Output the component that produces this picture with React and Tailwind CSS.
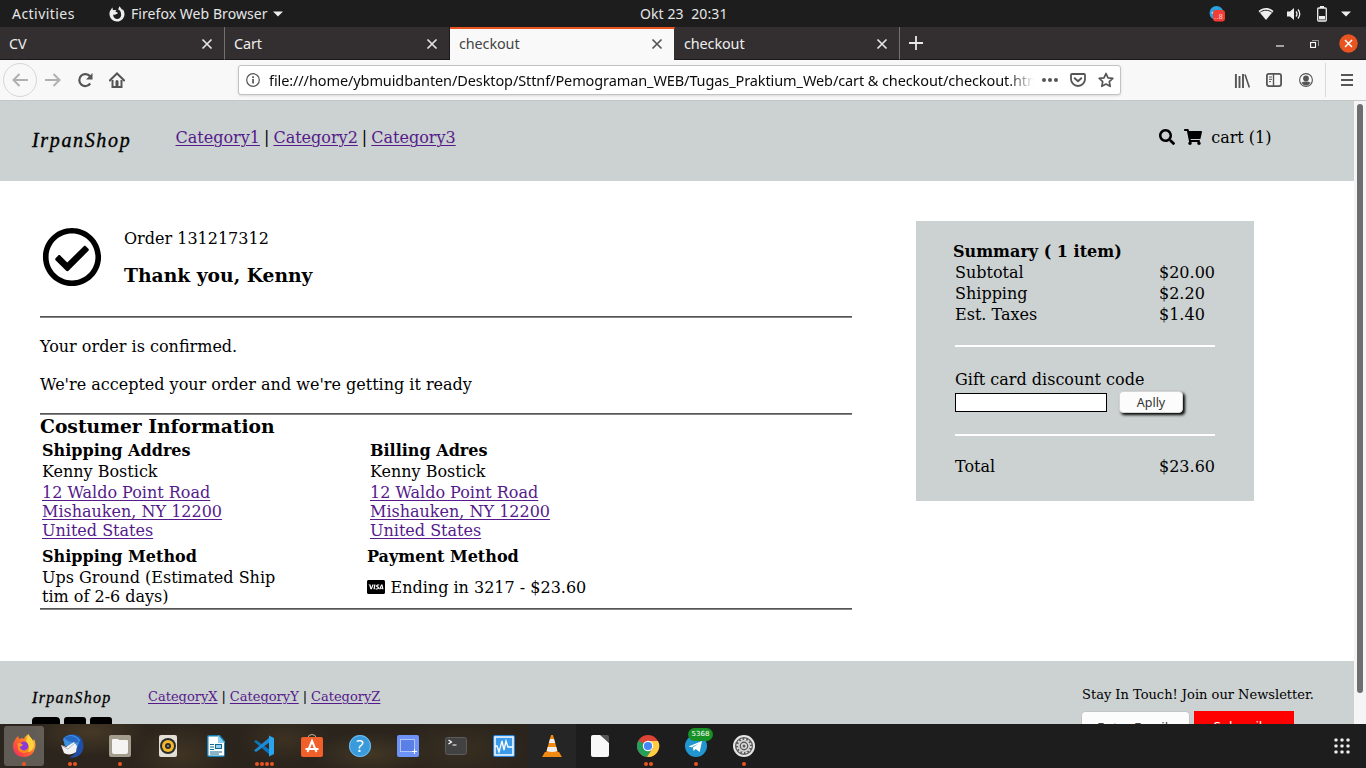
import React from "react";
import { FaSearch, FaShoppingCart, FaCcVisa, FaRegCheckCircle } from "react-icons/fa";

const ui = "font-['Noto_Sans',sans-serif]";

function Close({ className }) {
  return (
    <svg width="12" height="12" viewBox="0 0 12 12" className={className}>
      <path d="M1.5 1.5l9 9M10.5 1.5l-9 9" stroke="currentColor" strokeWidth="1.7" fill="none" />
    </svg>
  );
}

function TopBar() {
  return (
    <div className={`flex h-[27px] items-center bg-[#1d1d1d] text-[14px] text-[#e6e6e6] ${ui}`}>
      <div className="flex w-[640px] items-center">
        <span className="ml-3 w-[97px] whitespace-nowrap tracking-[0.45px]">Activities</span>
        <svg width="16" height="16" viewBox="0 0 16 16">
          <path d="M2.2 3.2C.8 4.700.3 6.400.5 8.500c.4 4 3.500 7 7.500 7s7.500-3.200 7.500-7.300c0-2.200-.8-4-1.900-5.200l-.4 1.400C12.500 2.600 11.400 1.300 10 .3c.2 1.200-.2 2.200-1 3 1.800.8 3 2.500 3 4.500a4 4 0 1 1-7.800.7c.8.5 1.900.4 2.600-.2l1.700-.6c.4-.9-.2-1.600-1-1.700L6.200 5.900l1.200-1.400C6.200 3.900 5 4 4.300 4.300 3.500 3.400 3.500 2.500 3.700 1.500 3 2 2.500 2.500 2.200 3.200z" fill="#eee" />
        </svg>
        <span className="ml-[6px] whitespace-nowrap tracking-[0.06px]">Firefox Web Browser</span>
        <svg className="ml-[5px]" width="10" height="6" viewBox="0 0 10 6"><path d="M0 .5h10L5 5.500z" fill="#eee" /></svg>
      </div>
      <span className="whitespace-pre tracking-[0.1px]">Okt 23  20:31</span>
      <div className="ml-auto flex items-center pr-[15px]">
        <svg className="mr-[33px]" width="16" height="16" viewBox="0 0 16 16">
          <circle cx="7.500" cy="7" r="7" fill="#2aa1dc" />
          <path d="M2 7l4-2v3z" fill="#fff" />
          <rect x="4" y="4" width="12" height="11.500" rx="3" fill="#f23c34" />
          <text x="5" y="13" fontSize="7" fill="#ffd5cf" fontFamily="DejaVu Sans">..8</text>
        </svg>
        <svg className="mr-[13px]" width="16" height="14" viewBox="0 0 16 14">
          <path d="M.5 4C5 0 11 0 15.500 4L8 13z" fill="#eee" />
          <path d="M2.200 5.200c3.500-2.600 8-2.600 11.600 0" stroke="#1d1d1d" strokeWidth="1" fill="none" />
        </svg>
        <svg className="mr-[15px]" width="15" height="14" viewBox="0 0 15 14">
          <path d="M0 4.500h3L7 1v12L3 9.500H0z" fill="#eee" />
          <path d="M9 4.500q2 2.500 0 5M11 2.500q3.500 4.500 0 9" stroke="#eee" strokeWidth="1.300" fill="none" />
        </svg>
        <svg className="mr-[14px]" width="10" height="16" viewBox="0 0 10 16">
          <path d="M3 0h4v2H3z" fill="#eee" />
          <rect x=".7" y="2" width="8.600" height="13" rx="1" stroke="#eee" strokeWidth="1.300" fill="none" />
          <path d="M2 10h6v3.500H2z" fill="#eee" />
        </svg>
        <svg width="10" height="6" viewBox="0 0 10 6"><path d="M0 .5h10L5 5.500z" fill="#eee" /></svg>
      </div>
    </div>
  );
}

function Tab({ title, active, line }) {
  return (
    <div
      className={`flex h-[33px] w-[225px] items-center justify-between border-r pl-[9px] pr-[11px] text-[14.400px] ${
        active
          ? "border-r-[#332f31] border-t-2 border-t-[#e95420] bg-[#f9f9f9] pb-px text-[#444]"
          : line
            ? "border-b border-r-[#727072] border-b-[#1a1a1a] pt-px text-[#eee]"
            : "border-b border-r-[#1d1b1c] border-b-[#1a1a1a] pt-px text-[#eee]"
      }`}
    >
      <span className="tracking-[-0.1px]">{title}</span>
      <Close className={active ? "text-[#555]" : "text-[#e4e4e4]"} />
    </div>
  );
}

function TabBar() {
  return (
    <div className={`flex h-[33px] bg-[#332f31] ${ui}`}>
      <Tab title="CV" line />
      <Tab title="Cart" />
      <Tab title="checkout" active />
      <Tab title="checkout" line />
      <div className="flex flex-1 items-center border-b border-[#1a1a1a] pl-[9px] pr-[9px]">
        <svg width="14" height="14" viewBox="0 0 14 14"><path d="M7 0v14M0 7h14" stroke="#e8e8e8" strokeWidth="1.800" /></svg>
        <div className="-mr-px ml-auto flex items-center pt-px">
          <svg className="mr-[26px] mt-1" width="8" height="2"><path d="M0 1h8" stroke="#eee" strokeWidth="1.200" /></svg>
          <svg className="mr-[20px]" width="9" height="8" viewBox="0 0 9 8">
            <path d="M2 .5h6.500V6" stroke="#999" fill="none" />
            <rect x=".6" y="2.500" width="4.900" height="4.900" stroke="#fff" strokeWidth="1.100" fill="none" />
          </svg>
          <svg width="19" height="19" viewBox="0 0 19 19">
            <circle cx="9.500" cy="9.500" r="9.200" fill="#e95420" />
            <path d="M6 6l7 7M13 6l-7 7" stroke="#fff" strokeWidth="1.500" />
          </svg>
        </div>
      </div>
    </div>
  );
}

function Toolbar() {
  return (
    <div className={`flex h-[41px] items-center border-b border-[#c6c6c6] bg-[#f8f8f8] text-[#555] ${ui}`}>
      <div className="flex w-[238px] items-center pl-[3px]">
        <div className="flex size-[34px] items-center justify-center rounded-full border border-[#d6d6d6] text-[#b0b0b0]">
          <svg width="16" height="14" viewBox="0 0 16 14"><path d="M7.500 1l-6 6 6 6M1.500 7H16" fill="none" stroke="currentColor" strokeWidth="2" /></svg>
        </div>
        <svg className="ml-2 text-[#b0b0b0]" width="16" height="14" viewBox="0 0 16 14"><path d="M8.500 1l6 6-6 6M14.500 7H0" fill="none" stroke="currentColor" strokeWidth="2" /></svg>
        <svg className="ml-4" width="16" height="16" viewBox="0 0 16 16">
          <path d="M13 4.300A6 6 0 1 0 13.200 11.500" fill="none" stroke="currentColor" strokeWidth="2.200" />
          <path d="M15.500 1v6.500H9z" fill="currentColor" />
        </svg>
        <svg className="ml-4" width="16" height="16" viewBox="0 0 16 16">
          <path d="M.8 8.500L8 1.500l7.200 7" fill="none" stroke="currentColor" strokeWidth="2" strokeLinecap="round" />
          <path d="M3.500 8v7h9V8" fill="none" stroke="currentColor" strokeWidth="2" />
          <path d="M6.500 9.500a1.500 1.500 0 0 1 3 0V15h-3z" fill="currentColor" />
        </svg>
      </div>
      <div className="flex h-[30px] w-[883px] items-center rounded-[3px] border border-[#c2c2c2] bg-white pl-[7px] pr-[6px] shadow-sm">
        <svg width="14" height="14" viewBox="0 0 14 14">
          <circle cx="7" cy="7" r="6.300" fill="none" stroke="currentColor" strokeWidth="1.200" />
          <path d="M6.200 6h1.700v4.500H6.200zM6.200 3.300h1.700v1.600H6.200z" fill="currentColor" />
        </svg>
        <span className="ml-[9px] w-[765px] overflow-hidden whitespace-nowrap text-[14.500px] leading-[22px] tracking-[-0.1px] text-[#0c0c0d] [mask-image:linear-gradient(to_right,black_96.500%,transparent)]">
          file:///home/ybmuidbanten/Desktop/Sttnf/Pemograman_WEB/Tugas_Praktium_Web/cart &amp; checkout/checkout.html
        </span>
        <svg className="ml-[8px]" width="16" height="4" viewBox="0 0 16 4"><circle cx="2" cy="2" r="2" fill="currentColor" /><circle cx="8" cy="2" r="2" fill="currentColor" /><circle cx="14" cy="2" r="2" fill="currentColor" /></svg>
        <svg className="ml-3" width="16" height="14" viewBox="0 0 16 14">
          <path d="M2 1h12q1 0 1 1v4a7 7 0 0 1-14 0V2q0-1 1-1z" fill="none" stroke="currentColor" strokeWidth="1.800" />
          <path d="M4.700 5.200L8 8.300l3.300-3.100" fill="none" stroke="currentColor" strokeWidth="1.900" strokeLinecap="round" />
        </svg>
        <svg className="ml-3" width="16" height="16" viewBox="0 0 16 16">
          <path d="M8 1.500l2 4.300 4.800.6-3.500 3.200.9 4.700L8 12l-4.200 2.300.9-4.700L1.200 6.400 6 5.800z" fill="none" stroke="currentColor" strokeWidth="1.700" strokeLinejoin="round" />
        </svg>
      </div>
      <div className="ml-auto flex h-full items-center pr-[13px]">
        <svg width="16" height="15" viewBox="0 0 16 15"><path d="M1.900 1v14M5.500 3v12M9 1v14" stroke="currentColor" strokeWidth="1.900" /><path d="M11 1.500l4.400 13" stroke="currentColor" strokeWidth="1.600" /></svg>
        <svg className="ml-4" width="16" height="14" viewBox="0 0 16 14">
          <rect x=".9" y=".9" width="14.200" height="12.200" rx="2" fill="none" stroke="currentColor" strokeWidth="1.800" />
          <path d="M7.500 1v12" stroke="currentColor" strokeWidth="1.400" /><path d="M3 4h3M3 6.300h3M3 8.600h2" stroke="currentColor" />
        </svg>
        <svg className="ml-[17px]" width="14" height="14" viewBox="0 0 14 14">
          <circle cx="7" cy="7" r="6.400" fill="none" stroke="currentColor" strokeWidth="1.100" />
          <circle cx="7" cy="5.500" r="2.900" fill="currentColor" />
          <path d="M2.500 9.500Q7 7.500 11.500 9.500 10 12.500 7 12.500T2.500 9.500z" fill="currentColor" />
        </svg>
        <div className="ml-3 h-[34px] w-px bg-[#dadada]" />
        <svg className="ml-[15px]" width="12" height="12" viewBox="0 0 12 12"><path d="M0 1h12M0 6h12M0 11h12" stroke="currentColor" strokeWidth="2" /></svg>
      </div>
    </div>
  );
}

function Link({ children }) {
  return <a className="text-[#551a8b] underline decoration-1 underline-offset-[2px]">{children}</a>;
}

function SiteHeader() {
  return (
    <header className="flex h-20 items-start bg-[#ccd1d1] pl-8 pt-[27px]">
      <span className="w-[143.500px] text-[20px] italic leading-[24px] tracking-[1.650px] font-['Liberation_Serif',serif] [-webkit-text-stroke:0.350px_black]">IrpanShop</span>
      <nav className="whitespace-nowrap [word-spacing:-1.050px]"><Link>Category1</Link> | <Link>Category2</Link> | <Link>Category3</Link></nav>
      <div className="ml-auto mr-[82.500px] flex items-center">
        <FaSearch size={16} className="-mt-0.5" />
        <FaShoppingCart size={18} className="-mt-0.5 ml-[9px]" />
        <span className="ml-[9px]">cart (1)</span>
      </div>
    </header>
  );
}

function Rule() {
  return <div className="h-0.5 w-[812px] border-t border-[#555] bg-[#858585]" />;
}

function Address({ title }) {
  return (
    <div className="w-[328px] pt-1">
      <div className="font-bold">{title}</div>
      <div className="mt-0.5">Kenny Bostick</div>
      <div className="mt-0.5">
        <Link>12 Waldo Point Road</Link><br />
        <Link>Mishauken, NY 12200</Link><br />
        <Link>United States</Link>
      </div>
    </div>
  );
}

function Order() {
  return (
    <section className="w-[812px]">
      <div className="flex h-[135px]">
        <FaRegCheckCircle size={60} className="ml-0.5 mt-[46px]" />
        <div className="ml-[22px] pt-12">
          <div>Order 131217312</div>
          <div className="mt-4 text-[18.720px] font-bold leading-[22px]">Thank you, Kenny</div>
        </div>
      </div>
      <Rule />
      <p className="mt-[19px]">Your order is confirmed.</p>
      <p className="mb-[19px] mt-[19px]">We're accepted your order and we're getting it ready</p>
      <Rule />
      <h3 className="text-[18.720px] font-bold leading-[22px]">Costumer Information</h3>
      <div className="flex pl-0.5">
        <Address title="Shipping Addres" />
        <Address title="Billing Adres" />
      </div>
      <div className="flex pb-0.5 pl-0.5 pt-[7px]">
        <div className="w-[325px]">
          <div className="font-bold">Shipping Method</div>
          <div className="mt-0.5 w-[260px]">Ups Ground (Estimated Ship<br />tim of 2-6 days)</div>
        </div>
        <div>
          <div className="font-bold">Payment Method</div>
          <div className="mt-3 flex items-center"><FaCcVisa size={18} className="-mt-px mr-[5.500px]" />Ending in 3217 - $23.60</div>
        </div>
      </div>
      <Rule />
    </section>
  );
}

function Row({ label, value }) {
  return (
    <div className="flex h-[21px] pt-0.5">
      <span className="w-[204px]">{label}</span>
      <span>{value}</span>
    </div>
  );
}

function Summary() {
  return (
    <aside className="ml-16 mt-10 h-[280px] w-[338px] bg-[#ccd1d1] pl-[39px] pt-[21px]">
      <div className="-ml-0.5 font-bold">Summary ( 1 item)</div>
      <Row label="Subtotal" value="$20.00" />
      <Row label="Shipping" value="$2.20" />
      <Row label="Est. Taxes" value="$1.40" />
      <div className="mt-[21px] h-0.5 w-[260px] bg-white" />
      <div className="mt-[23px]">Gift card discount code</div>
      <div className="flex pt-0.5">
        <div className="mt-0.5 h-[19px] w-[152px] border border-black bg-white" />
        <button className={`ml-3 h-[22px] w-[64px] rounded-[4px] border border-[#d5d5d5] bg-[#fcfcfc] text-[12.500px] leading-[21px] text-[#333] shadow-[2px_2px_3px_#000] ${ui}`}>Aplly</button>
      </div>
      <div className="mt-[21px] h-0.5 w-[260px] bg-white" />
      <div className="mt-[19px]"><Row label="Total" value="$23.60" /></div>
    </aside>
  );
}

function SiteFooter() {
  return (
    <footer className="flex h-[63px] overflow-hidden bg-[#ccd1d1] pl-8 text-[13px] leading-4">
      <div className="w-[116px] pt-[29px]">
        <div className="text-[16px] italic tracking-[1.350px] font-['Liberation_Serif',serif] [-webkit-text-stroke:0.300px_black]">IrpanShop</div>
        <div className="mt-[11px] flex gap-1">
          <div className="h-6 w-7 rounded-[4px] bg-black" />
          <div className="h-6 w-[22px] rounded-[3px] bg-black" />
          <div className="h-6 w-[22px] rounded-[3px] bg-black" />
        </div>
      </div>
      <nav className="whitespace-nowrap pt-[28px] [word-spacing:-0.200px]"><Link>CategoryX</Link> | <Link>CategoryY</Link> | <Link>CategoryZ</Link></nav>
      <div className="ml-auto w-[273px] pt-[26px]">
        <div className="whitespace-nowrap pl-px">Stay In Touch! Join our Newsletter.</div>
        <div className={`mt-2 flex text-[13.333px] ${ui}`}>
          <div className="h-[30px] w-[109px] rounded-[4px] border border-[#c4c4c4] bg-[#fcfcfc] pl-[15px] pt-[7px] text-[#444]">Enter Email</div>
          <div className="ml-[4px] h-8 w-[100px] bg-[#f00] pt-[7px] text-center text-white">Subscribe</div>
        </div>
      </div>
    </footer>
  );
}

function Page() {
  return (
    <div className="flex h-[623px] bg-white">
      <div className="w-[1354px] font-['DejaVu_Serif',serif] text-[16px] leading-[19px] text-black">
        <SiteHeader />
        <main className="flex h-[480px] pl-10">
          <Order />
          <Summary />
        </main>
        <SiteFooter />
      </div>
      <div className="w-3 bg-[#f5f5f5] px-[3px] pt-[3px]">
        <div className="h-[589px] w-1.5 rounded-full bg-[#6e6e6e]" />
      </div>
    </div>
  );
}

const icons = [
  {
    dots: 1, active: true,
    art: (
      <>
        <path d="M2 8C3 5 5 3 6 2l1 3c2-1 4-1 5 0 1-3 3-4 5-5 0 3 3 4 4 7l1-2c2 4 2 8 0 12-2 4-6 6-10 6C5 23 1 18 1 13c0-2 0-4 1-5z" fill="url(#flame)" />
        <path d="M13 3c1 3 3 4 4 6 3 6-1 10-5 10-5 0-7-4-6-8 2 1 4 0 6-2z" fill="#ff8a1c" />
        <circle cx="12" cy="12" r="4.400" fill="#8a3bd8" />
        <path d="M5 10c2-1 4-1 6 1l-3 2z" fill="#ff9a2a" />
        <path d="M16 1c4 3 6 7 6 11-1 4-4 6-6 6 2-4 1-8-2-11z" fill="#ffd43c" />
      </>
    ),
  },
  {
    dots: 2,
    art: (
      <>
        <path d="M3 5C7-1 17-1 21 4c4 6 3 15-3 18-3 2-7 2-9 1 5-1 8-5 7-10z" fill="#1f4fa8" />
        <path d="M3 5C8-1 16 0 20 6l-3 8L5 12z" fill="#3d8fe0" />
        <path d="M4 4C10 0 17 2 19 8l-5 1-6-2z" fill="#2569c4" />
        <path d="M1 11l5 2 8-5 3 4-1 6c-4 3-9 3-12 1z" fill="#f2f2f5" />
        <path d="M2 12l6 3 7-6" stroke="#b4b8c6" fill="none" />
      </>
    ),
  },
  {
    dots: 1,
    art: (
      <>
        <rect x="1" y="1" width="22" height="22" rx="2" fill="#a29d8d" />
        <path d="M4 6q0-1 1-1h5l1 1h8q1 0 1 1v11q0 2-2 2H6q-2 0-2-2z" fill="#f5f4f2" />
      </>
    ),
  },
  {
    art: (
      <>
        <rect x="3" y="1" width="18" height="22" rx="2" fill="#e4dfd6" />
        <circle cx="12" cy="12" r="8" fill="#2b2b2b" /><circle cx="12" cy="12" r="6" fill="#f2b82a" />
        <circle cx="12" cy="12" r="3" fill="#2b2b2b" /><circle cx="12" cy="12" r="1" fill="#999" />
      </>
    ),
  },
  {
    art: (
      <>
        <path d="M5 1h11l5 6v14q0 2-2 2H5q-2 0-2-2V3q0-2 2-2z" fill="#1380b4" />
        <path d="M4.500 2.500h9.500L20 9v12.500H4.500z" fill="#fff" /><path d="M14 1v8h7z" fill="#8fd0ee" />
        <path d="M6 10.500h4M6 13h4M6 15.500h4M6 18h12M6 20h9" stroke="#14678e" /><rect x="11.500" y="10.500" width="6" height="4" fill="#8fd0ee" stroke="#14678e" />
      </>
    ),
  },
  {
    dots: 4,
    art: (
      <>
        <path d="M2 7.500L18 21V16L4 6z" fill="#0a75bd" /><path d="M2 16.500L18 3v5L4 18z" fill="#1c8ad6" />
        <path d="M17 1.500l5 2.500v16l-5 2.500z" fill="#2ba3ee" />
      </>
    ),
  },
  {
    art: (
      <>
        <path d="M8 4q0-3.500 4-3.500t4 3.500" stroke="#c9b29c" fill="none" />
        <rect x="1" y="3" width="22" height="20" rx="2" fill="#f1602b" />
        <path d="M7.500 18L12 7l4.500 11M5.500 15h13" stroke="#fff" strokeWidth="2" fill="none" />
      </>
    ),
  },
  {
    art: (
      <>
        <circle cx="12" cy="12" r="11" fill="#3a9bdc" /><circle cx="12" cy="12" r="10.500" fill="none" stroke="#78bdea" />
        <text x="12" y="18" fontSize="17" textAnchor="middle" fill="#fff" fontFamily="Noto Sans">?</text>
      </>
    ),
  },
  {
    art: (
      <>
        <rect x="1" y="1" width="22" height="22" rx="2" fill="#6c93f5" />
        <rect x="4.500" y="5.500" width="14" height="12" fill="#5a80e8" stroke="#fff" strokeDasharray="1 1" /><path d="M16 17.500h5M18.500 15v5" stroke="#fff" />
      </>
    ),
  },
  {
    art: (
      <>
        <rect x="1.500" y="3.500" width="21" height="17" rx="2" fill="#424242" stroke="#5b5b5b" />
        <path d="M4.500 6l3 2-3 2M8.500 11h4" stroke="#fff" strokeWidth="1.200" fill="none" />
      </>
    ),
  },
  {
    art: (
      <>
        <rect x="1" y="1" width="22" height="22" rx="2" fill="#2484dd" />
        <rect x="3" y="3" width="18" height="18" fill="#3a9bec" stroke="#fff" strokeWidth="1.500" /><path d="M3 12h2l2 6 3-11 2 9 2-9 2 6h5" stroke="#fff" fill="none" strokeWidth="1.300" />
      </>
    ),
  },
  {
    raised: true,
    art: (
      <>
        <path d="M5 18h14l3 5H2z" fill="#ef8a12" /><path d="M11 1h2l5 18q-6 3-12 0z" fill="#f28a13" />
        <path d="M10 5h4l1.200 4H8.800zM7.700 13h8.600l1 4q-5 2-10.600 0z" fill="#eee" />
      </>
    ),
  },
  {
    art: (
      <>
        <path d="M5 1h9l7 8v12q0 2-2 2H5q-2 0-2-2V3q0-2 2-2z" fill="#f8f8f8" /><path d="M12 1h7q2 0 2 2v6z" fill="#555" />
      </>
    ),
  },
  {
    dots: 2,
    art: (
      <>
        <circle cx="12" cy="12" r="11" fill="#db4437" />
        <path d="M12 12L2.500 6.500A11 11 0 0 0 11 23l5-8z" fill="#25a05b" />
        <path d="M12 7h10A11 11 0 0 1 11 23l5.500-8.500z" fill="#ffce43" />
        <circle cx="12" cy="12" r="5.200" fill="#fff" /><circle cx="12" cy="12" r="4.100" fill="#4587f4" />
      </>
    ),
  },
  {
    dots: 1, badge: "5368",
    art: (
      <>
        <circle cx="12" cy="12" r="11" fill="#2297cf" /><path d="M4.500 12.500L18 7l-2.300 11-4-3-2 2-.9-3.500 6-4-7.300 3.700z" fill="#fff" />
      </>
    ),
  },
  {
    dots: 1,
    art: (
      <>
        <circle cx="12" cy="12" r="10" fill="#5a5a5a" stroke="#e5e5e5" strokeWidth="2" />
        <circle cx="12" cy="12" r="6.800" fill="none" stroke="#ddd" strokeWidth="1.800" strokeDasharray="2 1.560" />
        <circle cx="12" cy="12" r="5.200" fill="none" stroke="#ddd" strokeWidth="1.600" /><circle cx="12" cy="12" r="2.300" fill="none" stroke="#ddd" strokeWidth="1.500" />
      </>
    ),
  },
];

function Dock() {
  return (
    <div className="flex h-11 bg-[#1d1d1d] bg-[radial-gradient(ellipse_60px_25px_at_90px_8px,#463926,transparent),radial-gradient(ellipse_50px_30px_at_180px_30px,#403423,transparent),radial-gradient(ellipse_45px_25px_at_285px_15px,#3c3122,transparent),radial-gradient(ellipse_60px_22px_at_370px_30px,#423725,transparent),radial-gradient(ellipse_70px_30px_at_460px_25px,#382f20,transparent),linear-gradient(to_right,#2c251d_0,#2a241d_528px,#1d1d1d_528px)]">
      <svg width="0" height="0"><defs><linearGradient id="flame" x1="0" y1="1" x2="1" y2="0"><stop offset="0" stopColor="#f0246b" /><stop offset=".5" stopColor="#ff6a28" /><stop offset="1" stopColor="#ffe040" /></linearGradient></defs></svg>
      {icons.map((icon, i) => (
        <div key={i} className={`relative flex h-11 w-12 flex-col items-center ${icon.raised ? "bg-[#252525]" : ""}`}>
          <div className={`flex h-10 w-10 items-center justify-center rounded-[3px] ${icon.active ? "mt-0.5 bg-white/25" : "pt-1"}`}>
            <svg width="24" height="24" viewBox="0 0 24 24">{icon.art}</svg>
          </div>
          <div className={`flex gap-px ${icon.active ? "-mt-1" : "-mt-0.5"}`}>
            {Array.from({ length: icon.dots || 0 }, (_, n) => (
              <span key={n} className="size-1 rounded-full bg-[#e95420]" />
            ))}
          </div>
          {icon.badge && (
            <span className="absolute left-4 top-1 flex h-[13px] w-[25px] items-center justify-center rounded-full bg-[#179125] font-['DejaVu_Sans',sans-serif] text-[7px] text-white">
              {icon.badge}
            </span>
          )}
        </div>
      ))}
      <svg className="ml-auto mr-4 mt-3.5" width="16" height="16" viewBox="0 0 16 16">
        {[2, 8, 14].map((y) => [2, 8, 14].map((x) => <rect key={`${x}${y}`} x={x - 1.600} y={y - 1.600} width="3.200" height="3.200" rx="1" fill="#eee" />))}
      </svg>
    </div>
  );
}

export default function App() {
  return (
    <div className="flex h-[768px] w-[1366px] flex-col overflow-hidden">
      <TopBar />
      <TabBar />
      <Toolbar />
      <Page />
      <Dock />
    </div>
  );
}
